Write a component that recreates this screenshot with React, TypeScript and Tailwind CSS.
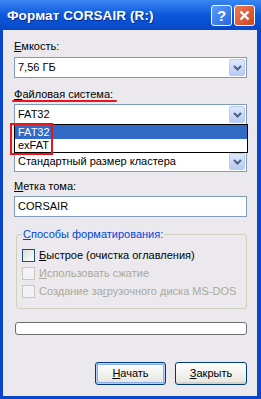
import React from "react";

const U = ({ children }: { children: React.ReactNode }) => (
  <span className="underline underline-offset-[1px] decoration-1">{children}</span>
);

function DropBtn() {
  return (
    <div className="w-[16px] h-[17px] mr-[1px] rounded-[2px] border border-[#b9cbf3] bg-gradient-to-b from-[#dfe8fd] to-[#b8cbf4] flex items-center justify-center">
      <svg width="9" height="6" viewBox="0 0 9 6">
        <path d="M1 1 L4.5 4.5 L8 1" stroke="#4d6185" strokeWidth="2" fill="none" />
      </svg>
    </div>
  );
}

function Combo({ text }: { text: string }) {
  return (
    <div className="h-[21px] border border-[#7f9db9] bg-white flex items-center justify-between pl-[3px]">
      <span>{text}</span>
      <DropBtn />
    </div>
  );
}

function Check({ label, disabled }: { label: React.ReactNode; disabled?: boolean }) {
  return (
    <div className="flex items-center h-[13px]">
      <div
        className={
          disabled
            ? "w-[13px] h-[13px] border border-[#cac8bb] bg-[#f3f2f4]"
            : "w-[13px] h-[13px] border border-[#1c5180] bg-gradient-to-br from-[#dcdcd7] to-white"
        }
      />
      <span className={disabled ? "ml-[4px] text-[#aca899]" : "ml-[4px] text-black"}>{label}</span>
    </div>
  );
}

export default function App() {
  return (
    <div className="w-[261px] h-[399px] flex flex-col bg-[#0a46cc] font-['Liberation_Sans',sans-serif] text-[11px] leading-[13px] text-black overflow-hidden">
      {/* Title bar */}
      <div className="h-[30px] flex items-center pl-[7px] pr-[6px] bg-gradient-to-b from-[#3a86f2] via-[#0c58dc] to-[#0848c8]">
        <span className="flex-1 text-white font-bold text-[13.5px] tracking-[0.1px] [text-shadow:1px_1px_0_#0a2a8a]">
          Формат CORSAIR (R:)
        </span>
        <div className="w-[21px] h-[21px] rounded-[3px] border border-white bg-gradient-to-br from-[#5c9cfb] to-[#2a65e0] flex items-center justify-center text-white font-bold text-[15px] leading-none">
          ?
        </div>
        <div className="ml-[2px] w-[21px] h-[21px] rounded-[3px] border border-white bg-gradient-to-br from-[#ec7a55] to-[#d0421c] flex items-center justify-center">
          <svg width="11" height="11" viewBox="0 0 11 11">
            <path d="M1.5 1.5 L9.5 9.5 M9.5 1.5 L1.5 9.5" stroke="white" strokeWidth="2.4" />
          </svg>
        </div>
      </div>

      {/* Body */}
      <div className="flex-1 ml-[3px] mr-[4px] mb-[3px] bg-[#ebe9ed] flex flex-col pl-[11px] pr-[10px]">
        <div className="mt-[10px] h-[13px]">
          <U>Е</U>мкость:
        </div>
        <div className="mt-[4px]">
          <Combo text="7,56 ГБ" />
        </div>

        <div className="mt-[10px] h-[13px] relative">
          <U>Ф</U>айловая система:
          <div className="absolute left-[-2px] top-[12px] w-[105px] h-[2px] bg-[#e8161a] rounded-full" />
        </div>
        <div className="mt-[3px] relative">
          <Combo text="FAT32" />
          <div className="absolute left-0 right-[-1px] top-[20px] h-[29px] border border-black bg-white z-10 flex flex-col">
            <div className="h-[14px] bg-[#316ac5] text-white pl-[3px] flex items-center">FAT32</div>
            <div className="h-[13px] pl-[3px] flex items-center">exFAT</div>
            <div className="absolute left-[-5px] top-[-2px] w-[43px] h-[32px] border-2 border-[#e8161a]" />
          </div>
        </div>

        <div className="mt-[26px]">
          <Combo text="Стандартный размер кластера" />
        </div>

        <div className="mt-[8px] h-[13px]">
          <U>М</U>етка тома:
        </div>
        <div className="mt-[3px] h-[21px] border border-[#7f9db9] bg-white flex items-center pl-[3px]">
          CORSAIR
        </div>

        <div className="mt-[17px] ml-[2px] relative border border-[#d0d0bf] rounded-[3px] h-[75px] pt-[14px] pl-[5px]">
          <div className="absolute left-[5px] top-[-7px] bg-[#ebe9ed] px-[1px] text-[#0046d5]">
            <U>С</U>пособы форматирования:
          </div>
          <div className="flex flex-col gap-[5px]">
            <Check label={<><U>Б</U>ыстрое (очистка оглавления)</>} />
            <Check disabled label={<><U>И</U>спользовать сжатие</>} />
            <Check disabled label={<>Создание за<U>г</U>рузочного диска MS-DOS</>} />
          </div>
        </div>

        <div className="mt-[13px] ml-[1px] h-[13px] rounded-[3px] border border-[#6e6e6e] bg-white" />

        <div className="mt-[27px] flex justify-end gap-[9px]">
          <div className="w-[71px] h-[23px] rounded-[3px] border border-[#003c74] bg-gradient-to-b from-white to-[#e6e5de] flex items-center justify-center shadow-[inset_0_0_0_1px_#b4cef9,inset_0_0_0_2px_#89adf0]">
            <span>
              <U>Н</U>ачать
            </span>
          </div>
          <div className="w-[72px] h-[23px] rounded-[3px] border border-[#003c74] bg-gradient-to-b from-white to-[#e6e5de] flex items-center justify-center shadow-[inset_0_-2px_0_#d6d0c5]">
            <span>
              <U>З</U>акрыть
            </span>
          </div>
        </div>
      </div>
    </div>
  );
}
